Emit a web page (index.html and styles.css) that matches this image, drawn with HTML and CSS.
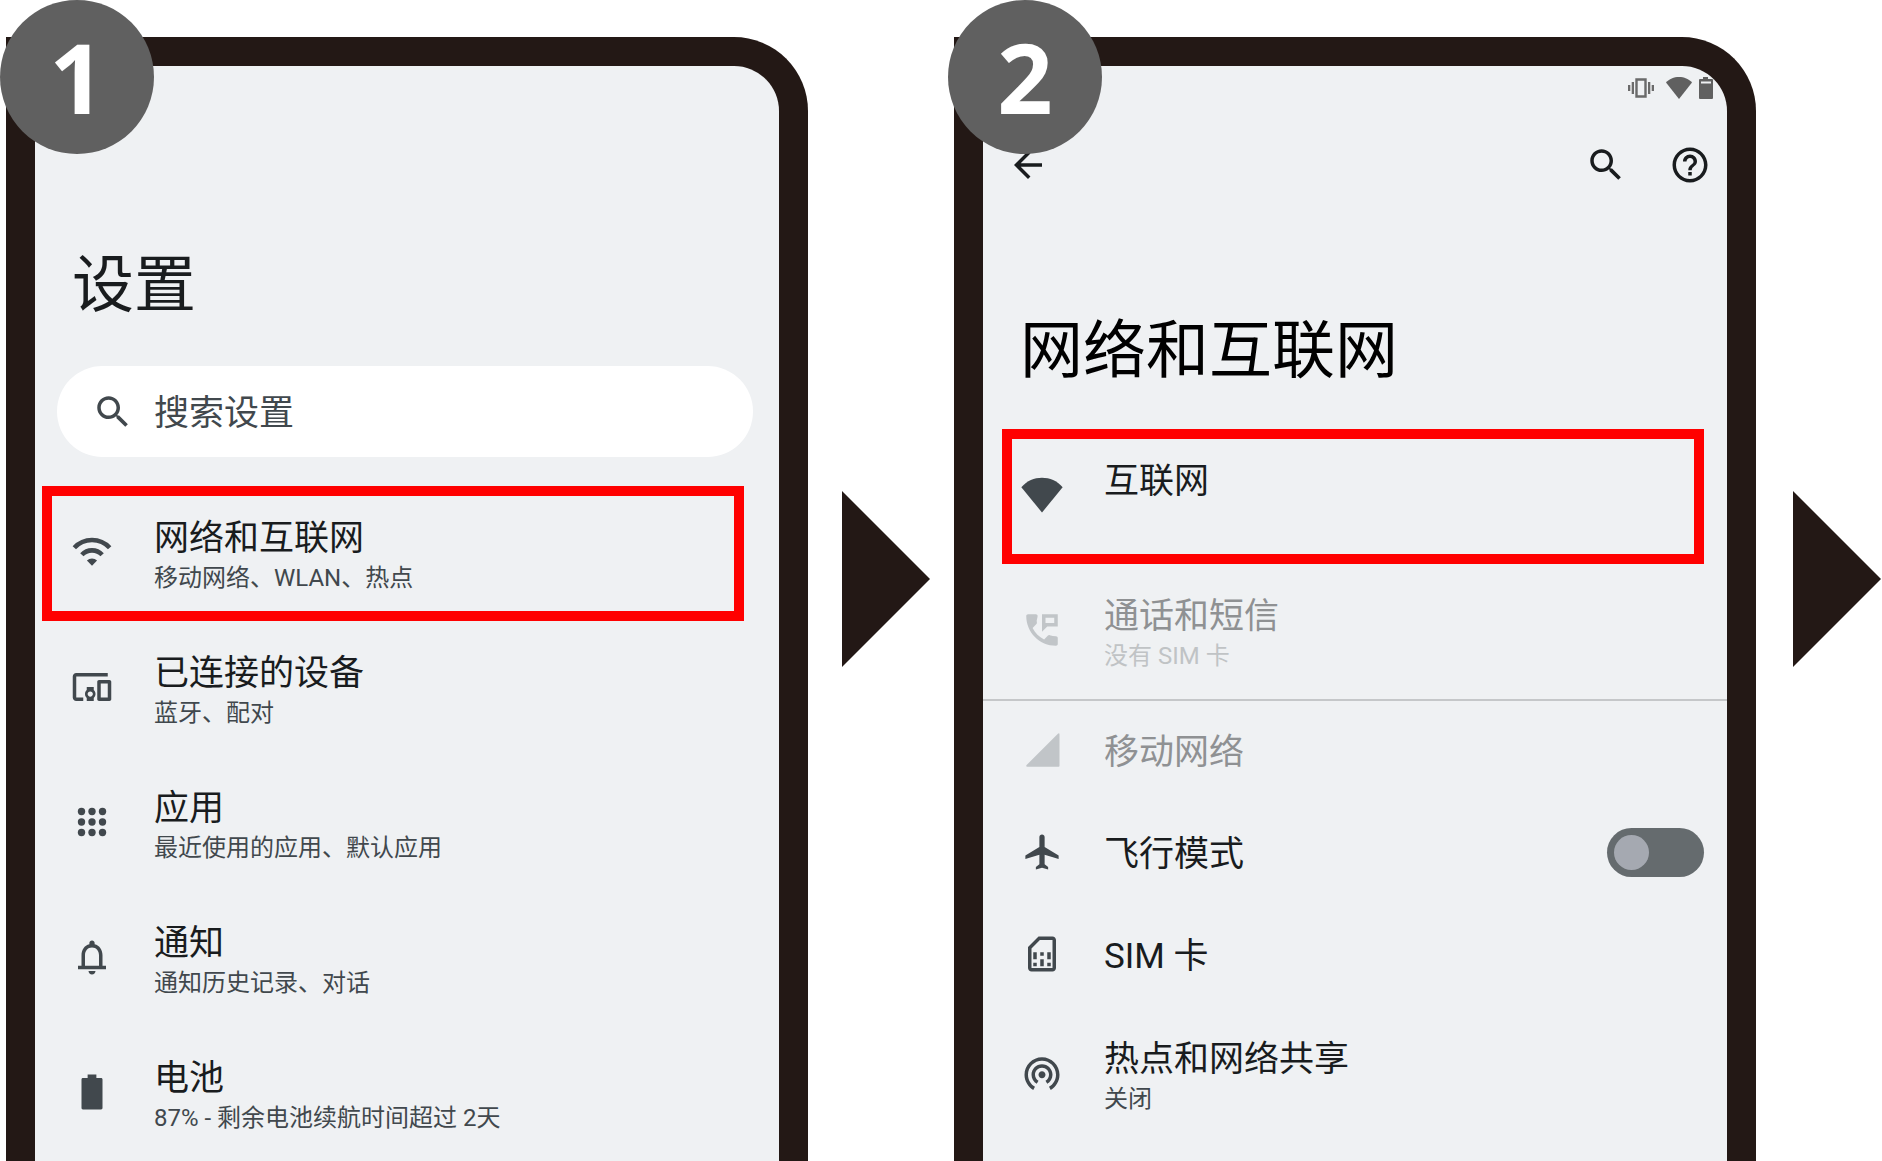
FILE: index.html
```html
<!DOCTYPE html>
<html lang="zh-CN">
<head>
    <meta charset="UTF-8">
    <meta name="viewport" content="width=device-width, initial-scale=1.0">
    <title>网络和互联网</title>
    <link rel="stylesheet" href="styles.css">
</head>
<body>
    <main class="steps">
        <!-- Step 1: settings home -->
        <section class="phone">
            <span class="badge">1</span>
            <h1 class="title home-title">设置</h1>
            <label class="search">
                <svg class="icon" viewBox="0 0 24 24"><path d="M15.5 14h-.79l-.28-.27C15.41 12.59 16 11.11 16 9.5 16 5.91 13.09 3 9.5 3S3 5.91 3 9.5 5.91 16 9.5 16c1.61 0 3.09-.59 4.23-1.57l.27.28v.79l5 4.99L20.49 19l-4.99-5zm-6 0C7.01 14 5 11.99 5 9.5S7.01 5 9.5 5 14 7.01 14 9.5 11.99 14 9.5 14z"/></svg>
                <input type="text" placeholder="搜索设置" aria-label="搜索设置">
            </label>
            <ul class="list home-list">
                <li>
                    <a class="item selected" href="#">
                        <svg class="icon" viewBox="0 0 24 24">
                            <path class="stroke" d="M1.9 9.6a13.7 13.7 0 0 1 20.2 0M6.2 13.6a7.9 7.9 0 0 1 11.6 0"/>
                            <path d="M12 19.8 9.1 16.9a4 4 0 0 1 5.8 0z"/>
                        </svg>
                        <span class="text"><span class="name">网络和互联网</span><span class="sub">移动网络、WLAN、热点</span></span>
                    </a>
                </li>
                <li>
                    <a class="item" href="#">
                        <svg class="icon" viewBox="0 0 24 24"><path d="M3 6h18V4H3c-1.1 0-2 .9-2 2v12c0 1.1.9 2 2 2h4v-2H3V6zm10 6H9v1.78c-.61.55-1 1.33-1 2.22s.39 1.67 1 2.22V20h4v-1.78c.61-.55 1-1.34 1-2.22s-.39-1.67-1-2.22V12zm-2 5.5c-.83 0-1.5-.67-1.5-1.5s.67-1.5 1.5-1.5 1.5.67 1.5 1.5-.67 1.5-1.5 1.5zM22 8h-6c-.5 0-1 .5-1 1v10c0 .5.5 1 1 1h6c.5 0 1-.5 1-1V9c0-.5-.5-1-1-1zm-1 10h-4v-8h4v8z"/></svg>
                        <span class="text"><span class="name">已连接的设备</span><span class="sub">蓝牙、配对</span></span>
                    </a>
                </li>
                <li>
                    <a class="item" href="#">
                        <svg class="icon" viewBox="0 0 24 24">
                            <circle cx="6" cy="6" r="2.1"/><circle cx="12" cy="6" r="2.1"/><circle cx="18" cy="6" r="2.1"/>
                            <circle cx="6" cy="12" r="2.1"/><circle cx="12" cy="12" r="2.1"/><circle cx="18" cy="12" r="2.1"/>
                            <circle cx="6" cy="18" r="2.1"/><circle cx="12" cy="18" r="2.1"/><circle cx="18" cy="18" r="2.1"/>
                        </svg>
                        <span class="text"><span class="name">应用</span><span class="sub">最近使用的应用、默认应用</span></span>
                    </a>
                </li>
                <li>
                    <a class="item" href="#">
                        <svg class="icon" viewBox="0 0 24 24"><path d="M12 22c1.1 0 2-.9 2-2h-4c0 1.1.9 2 2 2zm6-5v-6c0-3.07-1.63-5.64-4.5-6.32V4c0-.83-.67-1.5-1.5-1.5s-1.5.67-1.5 1.5v.68C7.64 5.36 6 7.92 6 11v6H4v2h16v-2h-2zm-2 0H8v-6c0-2.48 1.51-4.5 4-4.5s4 2.02 4 4.5v6z"/></svg>
                        <span class="text"><span class="name">通知</span><span class="sub">通知历史记录、对话</span></span>
                    </a>
                </li>
                <li>
                    <a class="item" href="#">
                        <svg class="icon" viewBox="0 0 24 24"><path d="M17.2 4H14.5V2h-5v2H6.8c-.45 0-.8.35-.8.8v16.4c0 .45.35.8.8.8h10.4c.45 0 .8-.35.8-.8V4.800c0-.45-.35-.8-.8-.8z"/></svg>
                        <span class="text"><span class="name">电池</span><span class="sub">87% - 剩余电池续航时间超过 2天</span></span>
                    </a>
                </li>
            </ul>
        </section>
        <svg class="arrow" viewBox="0 0 88 176"><path d="M0 0 88 88 0 176z"/></svg>

        <!-- Step 2: network and internet -->
        <section class="phone">
            <span class="badge">2</span>
            <div class="statusbar">
                <svg class="vibrate" viewBox="0 0 26 20">
                    <path d="M8.5 1.5h9v17h-9z" fill="none" stroke="#6a6a6a" stroke-width="2.4"/>
                    <path d="M0 7h2.300v6H0zM3.700 4H6v12H3.700zM20 4h2.300v12H20zM23.700 7H26v6h-2.300z" fill="#6a6a6a"/>
                </svg>
                <svg class="signal" viewBox="0 0 26 22"><path d="M13 22 0 5.5C3 2 8 0 13 0s10 2 13 5.5z"/></svg>
                <svg class="battery" viewBox="0 0 14 22"><path fill-rule="evenodd" d="M4 0h5v2h4q1 0 1 1v18q0 1-1 1H1q-1 0-1-1V3q0-1 1-1h3zM2 4.500v2h10v-2z"/></svg>
            </div>
            <div class="appbar">
                <button type="button" aria-label="返回"><svg class="icon" viewBox="0 0 24 24"><path d="M20 11H7.83l5.59-5.59L12 4l-8 8 8 8 1.41-1.41L7.83 13H20v-2z"/></svg></button>
                <button type="button" class="push" aria-label="搜索"><svg class="icon" viewBox="0 0 24 24"><path d="M15.5 14h-.79l-.28-.27C15.41 12.59 16 11.11 16 9.5 16 5.91 13.09 3 9.5 3S3 5.91 3 9.5 5.91 16 9.5 16c1.61 0 3.09-.59 4.23-1.57l.27.28v.79l5 4.99L20.49 19l-4.99-5zm-6 0C7.01 14 5 11.99 5 9.5S7.01 5 9.5 5 14 7.01 14 9.5 11.99 14 9.5 14z"/></svg></button>
                <button type="button" aria-label="帮助"><svg class="icon" viewBox="0 0 24 24"><path d="M11 18h2v-2h-2v2zm1-16C6.48 2 2 6.48 2 12s4.48 10 10 10 10-4.48 10-10S17.52 2 12 2zm0 18c-4.41 0-8-3.59-8-8s3.59-8 8-8 8 3.59 8 8-3.59 8-8 8zm0-14c-2.21 0-4 1.79-4 4h2c0-1.1.9-2 2-2s2 .9 2 2c0 2-3 1.75-3 5h2c0-2.25 3-2.5 3-5 0-2.21-1.79-4-4-4z"/></svg></button>
            </div>
            <h1 class="title network-title">网络和互联网</h1>
            <ul class="list network-list">
                <li>
                    <a class="item selected" href="#">
                        <svg class="icon" viewBox="0 0 24 24"><path d="M12 22 .2 7.600C3.500 3.900 7.500 2.200 12 2.200s8.500 1.700 11.800 5.400z"/></svg>
                        <span class="text"><span class="name">互联网</span><span class="sub"></span></span>
                    </a>
                </li>
                <li class="divided">
                    <a class="item disabled" href="#" aria-disabled="true">
                        <svg class="icon" viewBox="0 0 24 24"><path fill-rule="evenodd" d="M20 15.500c-1.250 0-2.450-.2-3.570-.57-.35-.11-.74-.03-1.020.24l-2.200 2.200c-2.830-1.440-5.150-3.750-6.590-6.580l2.200-2.210c.28-.27.36-.66.25-1.010C8.700 6.450 9.500 5.250 9.500 4c0-.55-.45-1-1-1H4c-.55 0-1 .45-1 1 0 9.390 7.610 17 17 17 .55 0 1-.45 1-1v-3.500c0-.55-.45-1-1-1zM12 3v10l3-3h6V3h-9zm2 2h5v3h-5z"/></svg>
                        <span class="text"><span class="name">通话和短信</span><span class="sub">没有 SIM 卡</span></span>
                    </a>
                </li>
                <li>
                    <a class="item single disabled" href="#" aria-disabled="true">
                        <svg class="icon" viewBox="0 0 24 24"><path d="M3.600 21.500h17.900q.5 0 .5-.5V3.100q0-1-.9-.4L3.200 20.600q-.6.900.4.900z"/></svg>
                        <span class="text"><span class="name">移动网络</span></span>
                    </a>
                </li>
                <li>
                    <label class="item single">
                        <svg class="icon" viewBox="0 0 24 24"><path d="M21.500 16v-2l-8-4.800V3.500c0-.83-.67-1.500-1.500-1.500s-1.500.67-1.500 1.500v5.700L2.500 14v2l8-2.500V19L8.500 20.500V22l3.500-1 3.500 1v-1.500l-2-1.500v-5.500l8 2.500z"/></svg>
                        <span class="text"><span class="name">飞行模式</span></span>
                        <input class="toggle" type="checkbox">
                    </label>
                </li>
                <li>
                    <a class="item single" href="#">
                        <svg class="icon" viewBox="0 0 24 24">
                            <path fill-rule="evenodd" d="M10 2h8c1.100 0 2 .9 2 2v16c0 1.100-.9 2-2 2H6c-1.100 0-2-.9-2-2V8zm.8 2L6 8.800V20h12V4z"/>
                            <path d="M7 11h2v4H7zM7 17h2v2H7zM11 11h2v2h-2zM11 15h2v4h-2zM15 11h2v4h-2zM15 17h2v2h-2z"/>
                        </svg>
                        <span class="text"><span class="name">SIM 卡</span></span>
                    </a>
                </li>
                <li>
                    <a class="item" href="#">
                        <svg class="icon" viewBox="0 0 24 24"><path d="M12 11c-1.100 0-2 .9-2 2s.9 2 2 2 2-.9 2-2-.9-2-2-2zm6 2c0-3.310-2.690-6-6-6s-6 2.690-6 6c0 2.220 1.210 4.150 3 5.190l1-1.740c-1.190-.7-2-1.970-2-3.450 0-2.210 1.790-4 4-4s4 1.790 4 4c0 1.480-.81 2.750-2 3.450l1 1.740c1.790-1.040 3-2.970 3-5.190zM12 3C6.480 3 2 7.480 2 13c0 3.700 2.010 6.920 4.990 8.650l1-1.730C5.610 18.530 4 15.960 4 13c0-4.420 3.580-8 8-8s8 3.580 8 8c0 2.960-1.610 5.530-4 6.920l1 1.730c2.990-1.730 5-4.950 5-8.650 0-5.520-4.480-10-10-10z"/></svg>
                        <span class="text"><span class="name">热点和网络共享</span><span class="sub">关闭</span></span>
                    </a>
                </li>
            </ul>
        </section>
        <svg class="arrow" viewBox="0 0 88 176"><path d="M0 0 88 88 0 176z"/></svg>
    </main>
</body>
</html>
```
FILE: styles.css
```css
* {
    margin: 0;
    padding: 0;
    box-sizing: border-box;
}
body {
    background-color: #fff;
    color: #191c1e;
    font-family: Roboto, "Noto Sans CJK SC", sans-serif;
}
.steps {
    display: flex;
    min-height: 100vh;
    padding: 0 1px 0 6px;
}

/* Phone frame, open at the bottom */
.phone {
    position: relative;
    flex: 1;
    margin-top: 37px;
    border: 29px solid #231815;
    border-bottom: none;
    border-radius: 0 74px 0 0;
    background-color: #eff1f3;
}
.badge {
    position: absolute; /* sits over the corner of the frame */
    top: -66px;
    left: -35px;
    width: 154px;
    height: 154px;
    border-radius: 50%;
    background-color: #606060;
    color: #fff;
    font-family: "Open Sans", sans-serif;
    font-size: 97px;
    font-weight: 700;
    line-height: 152px;
    text-align: center;
}
.arrow {
    flex: none;
    align-self: center;
    width: 88px;
    height: 176px;
    margin: 0 24px 4px 34px;
    fill: #231815;
}
.arrow:last-child {
    margin-left: 37px;
    margin-right: 0;
}

.icon {
    display: block;
    flex: none;
    width: 42px;
    height: 42px;
    fill: #41484d;
}
.stroke {
    fill: none;
    stroke: #41484d;
    stroke-width: 2.6;
}

.title {
    padding: 0 37px;
    font-size: 63px;
    font-weight: 400;
    line-height: 72px;
}
.home-title {
    margin-top: 184px;
    font-size: 62px;
}
.network-title {
    margin-top: 95px;
    color: #000;
}

.search {
    display: flex;
    align-items: center;
    gap: 20px;
    height: 91px;
    margin: 44px 26px 0 22px;
    padding: 0 35px;
    border-radius: 46px;
    background-color: #fff;
}
.search input {
    flex: 1;
    min-width: 0;
    height: 56px;
    padding-top: 4px;
    border: none;
    outline: none;
    background: none;
    color: #41484d;
    font-family: inherit;
    font-size: 35px;
}
.search input::placeholder {
    color: #41484d;
    opacity: 1;
}

/* Status bar and app bar */
.statusbar {
    display: flex;
    justify-content: flex-end;
    align-items: center;
    height: 44px;
    padding-right: 14px;
    fill: #606060;
}
.vibrate {
    width: 26px;
    height: 20px;
    margin-right: 12px;
}
.signal {
    width: 26px;
    height: 22px;
    margin-right: 7px;
}
.battery {
    width: 14px;
    height: 22px;
}
.appbar {
    display: flex;
    align-items: center;
    gap: 42px;
    height: 110px;
    padding: 0 16px 0 24px;
}
.appbar button {
    border: none;
    background: none;
    cursor: pointer;
}
.appbar .icon {
    fill: #191c1e;
}
.push {
    margin-left: auto;
}

/* Settings rows */
.list {
    list-style-type: none;
}
.home-list {
    margin-top: 29px;
}
.network-list {
    margin-top: 42px;
}
.item {
    display: flex;
    align-items: center;
    gap: 41px;
    min-height: 135px;
    padding-bottom: 4px;
    color: inherit;
    text-decoration: none;
    cursor: pointer;
}
.home-list .item {
    margin: 0 35px 0 7px;
    padding-left: 29px;
}
.network-list .item {
    margin: 0 23px 0 19px;
    padding-left: 19px;
}
.item.single {
    min-height: 102px;
}
.selected {
    outline: 10px solid #f00;
    outline-offset: -10px;
}
.divided {
    border-bottom: 2px solid #c5c7c9;
}
.text {
    flex: 1;
    padding-top: 9px;
}
.single .text {
    padding-top: 6px;
}
.name {
    display: block;
    font-size: 35px;
    line-height: 44px;
}
.sub {
    display: block;
    min-height: 35px;
    color: #41484d;
    font-size: 24px;
    line-height: 35px;
}
.disabled .name {
    color: #8f9193;
}
.disabled .sub {
    color: #c0c3c5;
}
.disabled .icon {
    fill: #c1c5c8;
}

.toggle {
    appearance: none;
    width: 97px;
    height: 49px;
    padding: 7px;
    border-radius: 25px;
    background-color: #656b6e;
    cursor: pointer;
}
.toggle::before {
    content: "";
    display: block;
    width: 35px;
    height: 35px;
    border-radius: 50%;
    background-color: #a5a9b1;
}
.toggle:checked::before {
    margin-left: auto;
}
```
